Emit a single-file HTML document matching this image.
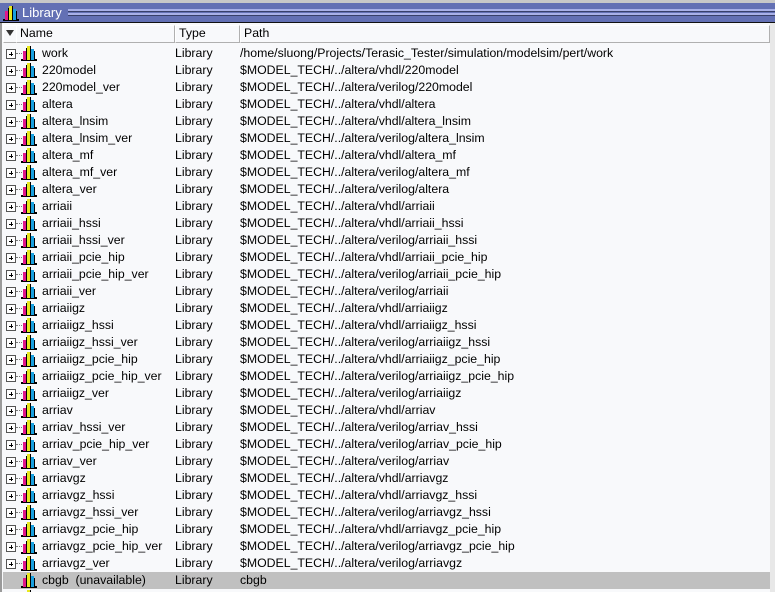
<!DOCTYPE html>
<html style="width:775px;height:592px;overflow:hidden"><head><style>
*{margin:0;padding:0;box-sizing:border-box}
body{width:775px;height:592px;overflow:hidden;background:#f8f9fb;font-family:"Liberation Sans",sans-serif;font-size:12.3px;color:#000;position:relative}
.top{position:absolute;left:0;top:0;width:775px;height:3px;background:#c8c8c8}
.tb{position:absolute;left:0;top:3px;width:775px;height:19px;background:#6370b4}
.tb .t{position:absolute;left:22px;top:2px;color:#fff;font-size:13px}
.grip{position:absolute;left:68px;right:0;height:1px}
.blk{position:absolute;left:0;top:22px;width:775px;height:1px;background:#111}
.lb{position:absolute;left:0;top:23px;width:2px;height:569px;background:#9a9a9a}
.rb{position:absolute;left:770px;top:23px;width:5px;height:569px;background:#e8e8e8}
.hdr{position:absolute;top:25px;height:18px;background:#f8f9fb;border:1px solid #b0b0b0;border-left-color:#fff;border-top-color:#fff;padding-left:3px;line-height:15px;top:25px}
.row{position:absolute;left:3px;width:767px;height:17px;line-height:17px}
.row.sel{background:#c0c0c0}
.row span{position:absolute;top:0}
.pl{position:absolute;left:3px;top:4px;width:10px;height:10px;border:1px solid #555;background:#fff}
.pl:before{content:"";position:absolute;left:2px;top:3.5px;width:4px;height:1px;background:#000}
.pl:after{content:"";position:absolute;left:3.5px;top:2px;width:1px;height:4px;background:#000}
.dot{position:absolute;left:13px;top:8px;width:6px;border-top:1px dotted #777}
.ic{position:absolute;left:18px;top:1px}
#rows{position:absolute;left:0;top:0;width:775px;height:592px;overflow:hidden}
</style></head><body>
<div class="top"></div>
<div class="tb">
<svg style="position:absolute;left:3px;top:2px" width="16" height="16"><rect x="0" y="14" width="16" height="2" fill="#000"/><rect x="2" y="6" width="3" height="9" fill="#e0188a"/><rect x="6" y="1" width="3" height="14" fill="#e8e820"/><rect x="10" y="4" width="3" height="11" fill="#18a0e0"/><rect x="5" y="3" width="1" height="12" fill="#000"/><rect x="9" y="1" width="1" height="14" fill="#000"/><rect x="13" y="6" width="1" height="9" fill="#000"/></svg>
<div class="t">Library</div>
<div class="grip" style="top:6px;background:#a8b0e8"></div>
<div class="grip" style="top:7px;background:#a8b0e8"></div>
<div class="grip" style="top:8px;background:#38406a"></div>
<div class="grip" style="top:10px;background:#a8b0e8"></div>
<div class="grip" style="top:11px;background:#a8b0e8"></div>
<div class="grip" style="top:12px;background:#38406a"></div>
</div>
<div class="blk"></div>
<div class="lb"></div>
<div class="rb"></div>
<div class="hdr" style="left:3px;width:14px;padding:0"><svg width="12" height="14"><path d="M2 4 L10 4 L6 10 Z" fill="#333"/></svg></div>
<div class="hdr" style="left:16px;width:159px">Name</div>
<div class="hdr" style="left:175px;width:65px">Type</div>
<div class="hdr" style="left:240px;width:530px">Path</div>
<div id="rows"></div>
<script>
var d=[["work","/home/sluong/Projects/Terasic_Tester/simulation/modelsim/pert/work"],["220model","$MODEL_TECH/../altera/vhdl/220model"],["220model_ver","$MODEL_TECH/../altera/verilog/220model"],["altera","$MODEL_TECH/../altera/vhdl/altera"],["altera_lnsim","$MODEL_TECH/../altera/vhdl/altera_lnsim"],["altera_lnsim_ver","$MODEL_TECH/../altera/verilog/altera_lnsim"],["altera_mf","$MODEL_TECH/../altera/vhdl/altera_mf"],["altera_mf_ver","$MODEL_TECH/../altera/verilog/altera_mf"],["altera_ver","$MODEL_TECH/../altera/verilog/altera"],["arriaii","$MODEL_TECH/../altera/vhdl/arriaii"],["arriaii_hssi","$MODEL_TECH/../altera/vhdl/arriaii_hssi"],["arriaii_hssi_ver","$MODEL_TECH/../altera/verilog/arriaii_hssi"],["arriaii_pcie_hip","$MODEL_TECH/../altera/vhdl/arriaii_pcie_hip"],["arriaii_pcie_hip_ver","$MODEL_TECH/../altera/verilog/arriaii_pcie_hip"],["arriaii_ver","$MODEL_TECH/../altera/verilog/arriaii"],["arriaiigz","$MODEL_TECH/../altera/vhdl/arriaiigz"],["arriaiigz_hssi","$MODEL_TECH/../altera/vhdl/arriaiigz_hssi"],["arriaiigz_hssi_ver","$MODEL_TECH/../altera/verilog/arriaiigz_hssi"],["arriaiigz_pcie_hip","$MODEL_TECH/../altera/vhdl/arriaiigz_pcie_hip"],["arriaiigz_pcie_hip_ver","$MODEL_TECH/../altera/verilog/arriaiigz_pcie_hip"],["arriaiigz_ver","$MODEL_TECH/../altera/verilog/arriaiigz"],["arriav","$MODEL_TECH/../altera/vhdl/arriav"],["arriav_hssi_ver","$MODEL_TECH/../altera/verilog/arriav_hssi"],["arriav_pcie_hip_ver","$MODEL_TECH/../altera/verilog/arriav_pcie_hip"],["arriav_ver","$MODEL_TECH/../altera/verilog/arriav"],["arriavgz","$MODEL_TECH/../altera/vhdl/arriavgz"],["arriavgz_hssi","$MODEL_TECH/../altera/vhdl/arriavgz_hssi"],["arriavgz_hssi_ver","$MODEL_TECH/../altera/verilog/arriavgz_hssi"],["arriavgz_pcie_hip","$MODEL_TECH/../altera/vhdl/arriavgz_pcie_hip"],["arriavgz_pcie_hip_ver","$MODEL_TECH/../altera/verilog/arriavgz_pcie_hip"],["arriavgz_ver","$MODEL_TECH/../altera/verilog/arriavgz"],["cbgb&nbsp; (unavailable)","cbgb"],["",""]];
var ic='<svg class="ic" width="16" height="16"><rect x="0" y="13" width="16" height="2" fill="#000"/><rect x="2" y="5" width="3" height="9" fill="#e0188a"/><rect x="6" y="0" width="3" height="14" fill="#e8e820"/><rect x="10" y="3" width="3" height="11" fill="#18a0e0"/><rect x="5" y="2" width="1" height="12" fill="#000"/><rect x="9" y="0" width="1" height="14" fill="#000"/><rect x="13" y="5" width="1" height="9" fill="#000"/></svg>';
var h='';
for(var i=0;i<d.length;i++){var last=i==31,blank=i==32;
h+='<div class="row'+(last?' sel':'')+'" style="top:'+(45+17*i)+'px">'+(last||blank?'':'<div class="pl"></div><div class="dot"></div>')+ic+(blank?'':'<span style="left:39px">'+d[i][0]+'</span><span style="left:172px">Library</span><span style="left:237px">'+d[i][1]+'</span>')+'</div>';}
document.getElementById('rows').innerHTML=h;
</script>
</body></html>
